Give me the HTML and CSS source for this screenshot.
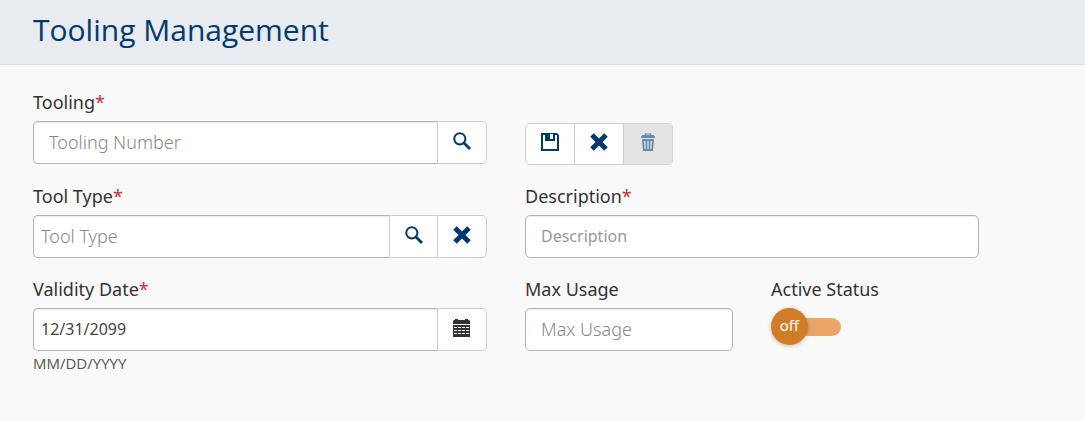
FILE: index.html
```html
<!DOCTYPE html>
<html lang="en">
<head>
<meta charset="utf-8">
<title>Tooling Management</title>
<link rel="stylesheet" href="styles.css">
</head>
<body>
<svg class="symbols" aria-hidden="true">
  <symbol id="icon-search" viewBox="0 0 18 18"><circle cx="6.8" cy="6.8" r="5.6" fill="none" stroke="currentColor" stroke-width="2"/><path d="M10.8 10.8L17 17" fill="none" stroke="currentColor" stroke-width="2.8"/></symbol>
  <symbol id="icon-clear" viewBox="0 0 18 18"><path d="M2 2L16 16M16 2L2 16" fill="none" stroke="currentColor" stroke-width="5"/></symbol>
  <symbol id="icon-save" viewBox="0 0 18 18"><path fill="currentColor" fill-rule="evenodd" d="M0 0H16L18 2V18H0ZM2 2V16H16V2H14V8H4V2ZM9 1V6H12V1Z"/></symbol>
  <symbol id="icon-trash" viewBox="0 0 14 18"><path d="M4.5 3V1H9.500V3" fill="none" stroke="currentColor" stroke-width="1.200"/><path fill="currentColor" fill-rule="evenodd" d="M1.500 2H12.500L14 4V5H0V4ZM1 6H13L12 18H2ZM3 8L3.500 16H4.700L4.500 8ZM6.300 8V16H7.700V8ZM9.500 8L9.300 16H10.500L11 8Z"/></symbol>
  <symbol id="icon-calendar" viewBox="0 0 18 18"><path fill="currentColor" d="M0 5V2L1 1H2V0H5V1H12V0H15V1H16L17 2V5ZM0 6H17V18H0Z"/><path d="M1 8.500H16M1 11.500H16M1 14.500H16" fill="none" stroke="#fff" stroke-width="1" stroke-dasharray="3 1"/></symbol>
</svg>
<header class="page-header"><h1 class="page-title">Tooling Management</h1></header>
<main>
  <form class="form">
    <div class="field">
      <label class="label" for="tooling">Tooling<span class="required">*</span></label>
      <div class="group">
        <input class="input input-roomy" id="tooling" type="text" placeholder="Tooling Number">
        <button class="btn" type="button" aria-label="Search tooling"><svg class="icon"><use href="#icon-search"/></svg></button>
      </div>
    </div>
    <div class="toolbar">
      <button class="btn" type="button" aria-label="Save"><svg class="icon"><use href="#icon-save"/></svg></button>
      <button class="btn" type="button" aria-label="Cancel"><svg class="icon"><use href="#icon-clear"/></svg></button>
      <button class="btn" type="button" aria-label="Delete" disabled><svg class="icon"><use href="#icon-trash"/></svg></button>
    </div>
    <div class="field">
      <label class="label" for="type">Tool Type<span class="required">*</span></label>
      <div class="group">
        <input class="input" id="type" type="text" placeholder="Tool Type">
        <button class="btn" type="button" aria-label="Search tool type"><svg class="icon"><use href="#icon-search"/></svg></button>
        <button class="btn" type="button" aria-label="Clear tool type"><svg class="icon"><use href="#icon-clear"/></svg></button>
      </div>
    </div>
    <div class="field">
      <label class="label" for="description">Description<span class="required">*</span></label>
      <div class="group"><input class="input input-roomy input-small" id="description" type="text" placeholder="Description"></div>
    </div>
    <div class="field">
      <label class="label" for="date">Validity Date<span class="required">*</span></label>
      <div class="group">
        <input class="input input-small" id="date" type="text" value="12/31/2099" aria-describedby="date-hint">
        <button class="btn btn-dark" type="button" aria-label="Choose date"><svg class="icon"><use href="#icon-calendar"/></svg></button>
      </div>
      <p class="hint" id="date-hint">MM/DD/YYYY</p>
    </div>
    <div class="pair">
      <div class="field">
        <label class="label" for="usage">Max Usage</label>
        <div class="group"><input class="input input-roomy" id="usage" type="text" placeholder="Max Usage"></div>
      </div>
      <div class="field">
        <label class="label" for="status">Active Status</label>
        <label class="switch">
          <input class="switch-input" id="status" type="checkbox" role="switch">
          <span class="knob">off</span><span class="track"></span>
        </label>
      </div>
    </div>
  </form>
</main>
</body>
</html>
```
FILE: styles.css
```css
* { box-sizing: border-box; }
body {
  margin: 0;
  background: #f9f9f9;
  color: #333;
  font-family: "Noto Sans", "Open Sans", sans-serif;
  font-size: 18px;
}
.symbols { display: none; }
.page-header {
  padding: 10px 33px 14px;
  background: #e8ebf0;
  border-bottom: 1px solid #d5dbe6;
}
.page-title {
  margin: 0;
  color: #003a70;
  font-family: "Open Sans", "Noto Sans", sans-serif;
  font-size: 30px;
  font-weight: 400;
  line-height: 40px;
}
.form {
  display: grid;
  grid-template-columns: 1fr 1fr;
  gap: 19px 38px;
  padding: 25px 106px 25px 33px;
}
.label {
  display: block;
  margin-bottom: 7px;
  font-weight: 400;
  line-height: 24px;
}
.required { color: #c9302c; }
.group { display: flex; }
.input {
  flex: 1;
  min-width: 0;
  height: 43px;
  padding: 0 7px 2px;
  border: 1px solid #b3b3b3;
  border-radius: 5px;
  background: #fff;
  box-shadow: inset 0 1px 1px rgba(0, 0, 0, 0.08);
  color: #444;
  font-family: inherit;
  font-size: 18px;
  font-weight: 300;
}
.input::placeholder { color: #888; opacity: 1; }
.input-roomy { padding: 0 15px 2px; }
.input-small { font-size: 16px; font-weight: 400; }
.input-small::placeholder { color: #999; }
.input:not(:last-child) {
  border-right: 0;
  border-radius: 5px 0 0 5px;
}
.btn {
  display: flex;
  align-items: center;
  justify-content: center;
  width: 49px;
  padding: 0 0 4px;
  border: 1px solid #ccc;
  border-left-width: 0;
  background: #fff;
  color: #003a70;
}
.group .btn { width: 50px; border-left-width: 1px; }
.group .btn:not(:last-child) { width: 48px; border-right-width: 0; }
.btn:first-child { width: 50px; border-left-width: 1px; border-radius: 5px 0 0 5px; }
.btn:last-child { border-radius: 0 5px 5px 0; }
.btn:disabled { background: #e4e4e4; border-color: #d5d5d5; color: #6488b0; }
.btn-dark { color: #333; }
.icon { width: 18px; height: 18px; }
.toolbar {
  display: flex;
  height: 42px;
  margin-top: 33px;
}
.hint {
  margin: 1px 0 0;
  color: #555;
  font-family: "Open Sans", "Noto Sans", sans-serif;
  font-size: 15px;
  line-height: 22px;
}
.pair {
  display: grid;
  grid-template-columns: minmax(0, 1fr) minmax(0, 1fr);
  gap: 38px;
}
.switch {
  position: relative;
  display: inline-flex;
  align-items: center;
}
.switch-input {
  position: absolute;
  inset: 0;
  margin: 0;
  opacity: 0;
}
.knob {
  z-index: 1;
  width: 37px;
  height: 37px;
  border-radius: 50%;
  background: #d17d27;
  box-shadow: 0 1px 4px rgba(0, 0, 0, 0.25);
  color: #fff;
  font-size: 15px;
  line-height: 35px;
  text-align: center;
}
.track {
  width: 43px;
  height: 18px;
  margin-left: -10px;
  border-radius: 9px;
  background: #eca568;
}
```
